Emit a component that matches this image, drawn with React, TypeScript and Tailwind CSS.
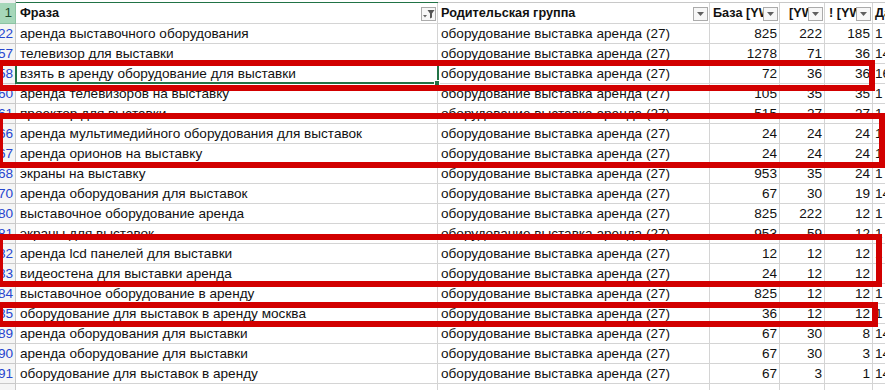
import React from "react";

type Row = { n: string; a: string; c: string; d: string; e: string; f: string };

const B_TEXT = "оборудование выставка аренда (27)";

const rows: Row[] = [
  { n: "22", a: "аренда выставочного оборудования", c: "825", d: "222", e: "185", f: "1" },
  { n: "57", a: "телевизор для выставки", c: "1278", d: "71", e: "36", f: "14" },
  { n: "58", a: "взять в аренду оборудование для выставки", c: "72", d: "36", e: "36", f: "16" },
  { n: "60", a: "аренда телевизоров на выставку", c: "105", d: "35", e: "35", f: "1" },
  { n: "61", a: "проектор для выставки", c: "515", d: "27", e: "27", f: "1" },
  { n: "66", a: "аренда мультимедийного оборудования для выставок", c: "24", d: "24", e: "24", f: "1" },
  { n: "67", a: "аренда орионов на выставку", c: "24", d: "24", e: "24", f: "1" },
  { n: "68", a: "экраны на выставку", c: "953", d: "35", e: "24", f: "1" },
  { n: "70", a: "аренда оборудования для выставок", c: "67", d: "30", e: "19", f: "14" },
  { n: "80", a: "выставочное оборудование аренда", c: "825", d: "222", e: "12", f: "1" },
  { n: "81", a: "экраны для выставок", c: "953", d: "59", e: "12", f: "1" },
  { n: "82", a: "аренда lcd панелей для выставки", c: "12", d: "12", e: "12", f: "1" },
  { n: "83", a: "видеостена для выставки аренда", c: "24", d: "12", e: "12", f: "" },
  { n: "84", a: "выставочное оборудование в аренду", c: "825", d: "12", e: "12", f: "1" },
  { n: "85", a: "оборудование для выставок в аренду москва", c: "36", d: "12", e: "12", f: "1" },
  { n: "89", a: "аренда оборудования для выставки", c: "67", d: "30", e: "8", f: "14" },
  { n: "90", a: "аренда оборудование для выставки", c: "67", d: "30", e: "3", f: "14" },
  { n: "91", a: "оборудование для выставок в аренду", c: "67", d: "3", e: "1", f: "14" },
];

function DropBtn({ filter }: { filter?: boolean }) {
  return (
    <div className="absolute right-[1px] top-[4px] w-[15px] h-[14px] border border-[#ababab] bg-[#f7f7f7] flex items-center justify-center">
      {filter ? (
        <svg width="13" height="12" viewBox="0 0 13 12">
          <path d="M1 7 H5 L3 9.5 Z" fill="#666" />
          <path d="M5.5 2 H12.5 L10 5.5 V9.5 L8 10.5 V5.5 Z" fill="#555" />
        </svg>
      ) : (
        <svg width="9" height="6" viewBox="0 0 9 6">
          <path d="M1 1 H8 L4.5 5 Z" fill="#606060" />
        </svg>
      )}
    </div>
  );
}

const cellBase = "h-full border-r border-b border-[#d4d4d4] shrink-0 overflow-hidden whitespace-nowrap flex items-center pt-[2px]";
const headBase = "h-full border-r border-b border-[#d4d4d4] shrink-0 overflow-hidden whitespace-nowrap flex items-center pt-[1px] relative font-bold text-[12.7px]";

export default function App() {
  return (
    <div
      className="relative w-[885px] h-[390px] overflow-hidden bg-white text-[13.6px] text-[#111]"
      style={{ fontFamily: '"Liberation Sans", Arial, sans-serif' }}
    >
      {/* top strip */}
      <div className="flex h-[3px]">
        <div className="w-[16px] shrink-0 bg-[#f0f0f0] border-r border-[#c6c6c6]" />
        <div className="w-[422px] shrink-0 border-b border-[#217346]" />
        <div className="flex-1 border-b border-[#c8c8c8]" />
      </div>
      {/* header row */}
      <div className="flex h-[21px]">
        <div className="w-[16px] shrink-0 h-full bg-[#a6d7b9] border-r border-b border-[#8cc3a2] flex items-center justify-end pr-[3px] pt-[1px] text-[#1b4a2c]">
          1
        </div>
        <div className={`${headBase} w-[422px] pl-[4px]`}>
          Фраза
          <DropBtn filter />
        </div>
        <div className={`${headBase} w-[272px] pl-[3px]`}>
          Родительская группа
          <DropBtn />
        </div>
        <div className={`${headBase} w-[70px] pl-[3px]`}>
          База [YW]
          <DropBtn />
        </div>
        <div className={`${headBase} w-[45px] pl-[9px]`}>
          [YW]
          <DropBtn />
        </div>
        <div className={`${headBase} w-[48px] pl-[4px]`}>
          ! [YW]
          <DropBtn />
        </div>
        <div className={`${headBase} w-[60px] pl-[2px]`}>Дата</div>
      </div>
      {/* data rows */}
      {rows.map((r) => (
        <div key={r.n} className="flex h-[20px]">
          <div className="w-[16px] shrink-0 h-full bg-[#f5f5f5] border-r border-b border-[#c9c9c9] overflow-hidden whitespace-nowrap flex items-center justify-end pr-[2px] pt-[2px] text-[#2646d0]">
            {r.n}
          </div>
          <div className={`${cellBase} w-[422px] pl-[4px]`}>{r.a}</div>
          <div className={`${cellBase} w-[272px] pl-[3px]`}>{B_TEXT}</div>
          <div className={`${cellBase} w-[70px] justify-end pr-[2px]`}>{r.c}</div>
          <div className={`${cellBase} w-[45px] justify-end pr-[2px]`}>{r.d}</div>
          <div className={`${cellBase} w-[48px] justify-end pr-[2px]`}>{r.e}</div>
          <div className={`${cellBase} w-[60px] pl-[2px]`}>{r.f}</div>
        </div>
      ))}
      <div className="flex h-[20px]">
        <div className="w-[16px] shrink-0 h-full bg-[#f5f5f5] border-r border-[#c9c9c9]" />
        <div className="w-[422px] shrink-0 h-full border-r border-[#d4d4d4]" />
        <div className="w-[272px] shrink-0 h-full border-r border-[#d4d4d4]" />
        <div className="w-[70px] shrink-0 h-full border-r border-[#d4d4d4]" />
        <div className="w-[45px] shrink-0 h-full border-r border-[#d4d4d4]" />
        <div className="w-[48px] shrink-0 h-full border-r border-[#d4d4d4]" />
      </div>

      {/* selected cell */}
      <div className="absolute left-[15px] top-[63px] w-[424px] h-[21px] border-2 border-[#217346]" />
      <div className="absolute left-[434px] top-[80px] w-[6px] h-[6px] bg-[#217346] border border-white" />

      {/* red highlight boxes */}
      <div className="absolute left-[-3px] top-[60px] w-[878px] h-[31px] border-[6px] border-[#d20000]" />
      <div className="absolute left-[-3px] top-[113px] w-[888px] h-[55px] border-[6px] border-[#d20000]" />
      <div className="absolute left-[-3px] top-[234px] w-[885px] h-[53px] border-[6px] border-[#d20000]" />
      <div className="absolute left-[-3px] top-[302px] w-[881px] h-[25px] border-[6px] border-[#d20000]" />
    </div>
  );
}
